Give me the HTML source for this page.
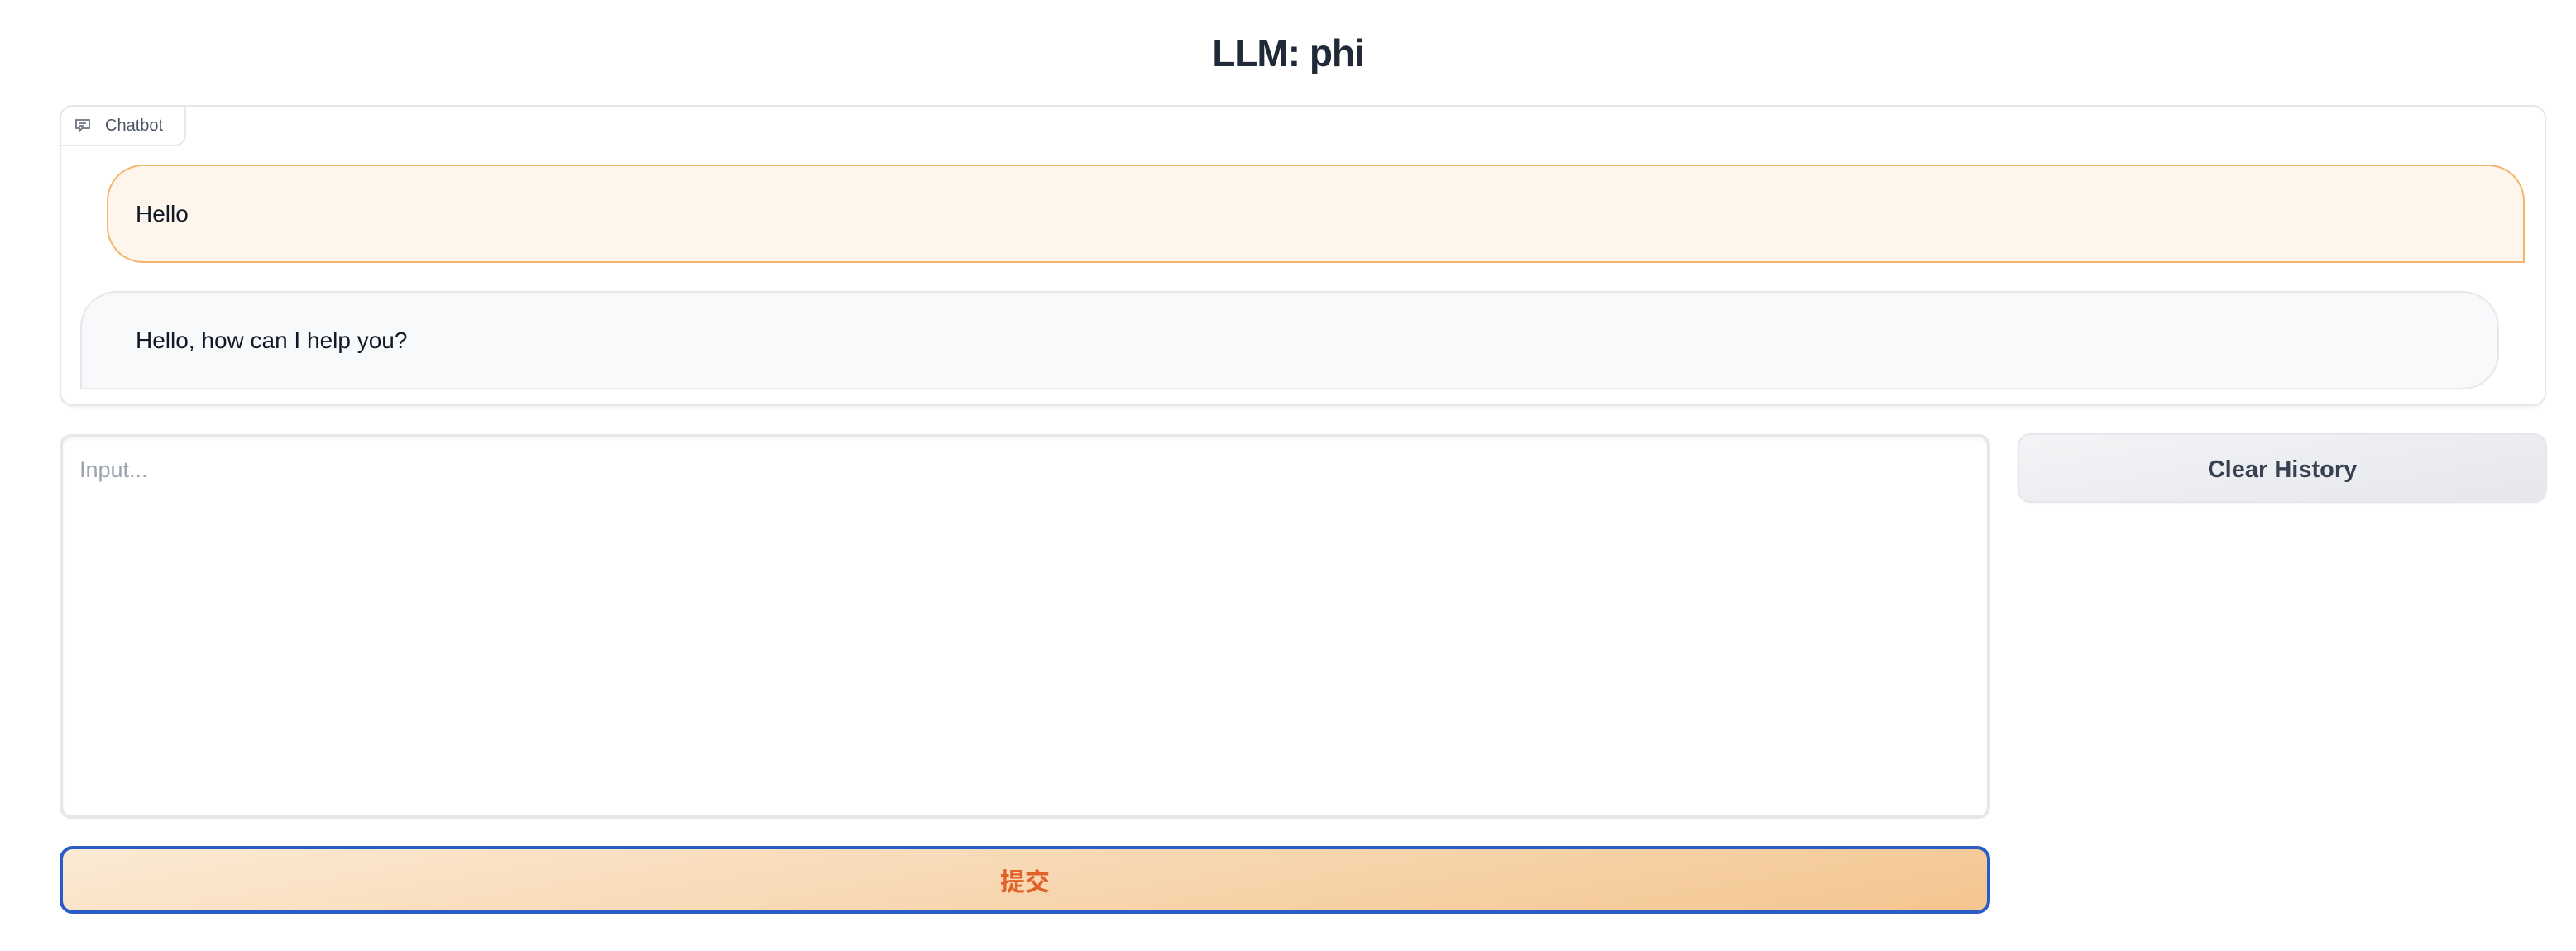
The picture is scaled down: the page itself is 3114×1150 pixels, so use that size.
<!DOCTYPE html>
<html><head><meta charset="utf-8"><style>
*{box-sizing:border-box;margin:0;padding:0}
body{width:3114px;height:1150px;background:#fff;font-family:"Liberation Sans","Noto Sans CJK SC",sans-serif;position:relative;overflow:hidden;color:#1f2937}
.abs{position:absolute}
h1{position:absolute;left:0;width:3114px;top:34px;text-align:center;font-size:46px;font-weight:bold;color:#1f2937;line-height:60px;letter-spacing:-1px}
.panel{left:72px;top:127px;width:3006px;height:364px;border:2px solid #e5e7eb;border-radius:16px;box-shadow:0 2px 3px rgba(0,0,0,.05)}
.tab{left:72px;top:127px;width:153px;height:50px;border:2px solid #e5e7eb;border-radius:16px 0 14px 0;background:#fff;font-size:20px;color:#4b5563;display:flex;align-items:center;padding-left:16px}
.tab svg{margin-right:17px}
.user{left:129px;top:199px;width:2923px;height:119px;background:#fef6ec;border:2px solid #f3b56e;border-radius:44px 44px 0 44px;font-size:28px;display:flex;align-items:center;padding-left:33px;color:#111827}
.bot{left:97px;top:352px;width:2924px;height:119px;background:#f8f9fb;border:2px solid #e5e7eb;border-radius:44px 44px 44px 0;font-size:28px;display:flex;align-items:center;padding-left:65px;color:#111827}
.ta{left:72px;top:525px;width:2334px;height:465px;border:4px solid #e5e7eb;border-radius:14px;box-shadow:inset 0 2px 4px rgba(0,0,0,.05);font-size:27px;color:#9ca3af;padding:24px 0 0 20px}
.clear{left:2439px;top:524px;width:640px;height:84px;border:2px solid #e5e7eb;border-radius:16px;background:linear-gradient(170deg,#f3f4f6,#e5e7eb);font-size:29px;font-weight:bold;color:#374151;display:flex;align-items:center;justify-content:center;box-shadow:0 1px 2px rgba(0,0,0,.05);padding-top:4px}
.sub{left:72px;top:1023px;width:2334px;height:82px;border:4px solid #2b5bc6;border-radius:16px;background:linear-gradient(170deg,#fbead4,#f4c590);font-size:30px;font-weight:bold;color:#e0612a;display:flex;align-items:center;justify-content:center}
</style></head><body>
<h1>LLM: phi</h1>
<div class="abs panel"></div>
<div class="abs tab"><svg width="20" height="18" viewBox="0 0 20 18" fill="none" stroke="#6b7280" stroke-width="1.8"><path d="M2 2h16v10H9l-3 4v-4H2z"/><path d="M6 6h8M6 9h5"/></svg>Chatbot</div>
<div class="abs user">Hello</div>
<div class="abs bot">Hello, how can I help you?</div>
<div class="abs ta">Input...</div>
<div class="abs clear">Clear History</div>
<div class="abs sub">提交</div>
</body></html>
